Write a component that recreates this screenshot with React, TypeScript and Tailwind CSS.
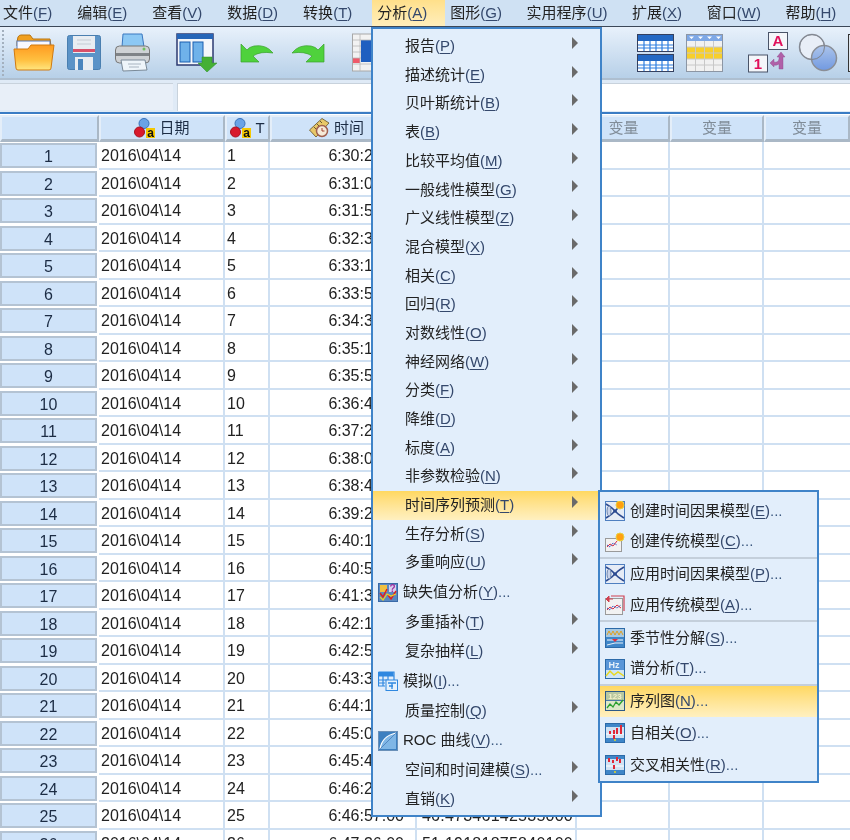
const CJK = "font-['Liberation_Sans','Noto_Sans_CJK_SC',sans-serif]"

const menuBar: [string, string][] = [
  ['文件', 'F'], ['编辑', 'E'], ['查看', 'V'], ['数据', 'D'], ['转换', 'T'], ['分析', 'A'],
  ['图形', 'G'], ['实用程序', 'U'], ['扩展', 'X'], ['窗口', 'W'], ['帮助', 'H'],
]

type Item = { label: string; key: string; dots?: boolean; arrow?: boolean; icon?: string; active?: boolean; h: string }

const analyze: Item[] = [
  { label: '报告', key: 'P', arrow: true, h: 'h-[28.7px]' },
  { label: '描述统计', key: 'E', arrow: true, h: 'h-[28.7px]' },
  { label: '贝叶斯统计', key: 'B', arrow: true, h: 'h-[28.7px]' },
  { label: '表', key: 'B', arrow: true, h: 'h-[28.7px]' },
  { label: '比较平均值', key: 'M', arrow: true, h: 'h-[28.7px]' },
  { label: '一般线性模型', key: 'G', arrow: true, h: 'h-[28.7px]' },
  { label: '广义线性模型', key: 'Z', arrow: true, h: 'h-[28.7px]' },
  { label: '混合模型', key: 'X', arrow: true, h: 'h-[28.7px]' },
  { label: '相关', key: 'C', arrow: true, h: 'h-[28.7px]' },
  { label: '回归', key: 'R', arrow: true, h: 'h-[28.7px]' },
  { label: '对数线性', key: 'O', arrow: true, h: 'h-[28.7px]' },
  { label: '神经网络', key: 'W', arrow: true, h: 'h-[28.7px]' },
  { label: '分类', key: 'F', arrow: true, h: 'h-[28.7px]' },
  { label: '降维', key: 'D', arrow: true, h: 'h-[28.7px]' },
  { label: '标度', key: 'A', arrow: true, h: 'h-[28.7px]' },
  { label: '非参数检验', key: 'N', arrow: true, h: 'h-[28.7px]' },
  { label: '时间序列预测', key: 'T', arrow: true, active: true, h: 'h-[28.7px]' },
  { label: '生存分析', key: 'S', arrow: true, h: 'h-[28.7px]' },
  { label: '多重响应', key: 'U', arrow: true, h: 'h-[28.7px]' },
  { label: '缺失值分析', key: 'Y', dots: true, icon: 'missing', h: 'h-[31px]' },
  { label: '多重插补', key: 'T', arrow: true, h: 'h-[28.7px]' },
  { label: '复杂抽样', key: 'L', arrow: true, h: 'h-[28.7px]' },
  { label: '模拟', key: 'I', dots: true, icon: 'sim', h: 'h-[31px]' },
  { label: '质量控制', key: 'Q', arrow: true, h: 'h-[28.7px]' },
  { label: 'ROC 曲线', key: 'V', dots: true, icon: 'roc', h: 'h-[31px]' },
  { label: '空间和时间建模', key: 'S', dots: true, arrow: true, h: 'h-[28.7px]' },
  { label: '直销', key: 'K', arrow: true, h: 'h-[28.7px]' },
]

type SubItem = { label: string; key: string; icon: string; active?: boolean; sep?: boolean }

const forecast: SubItem[] = [
  { label: '创建时间因果模型', key: 'E', icon: 'tcmNew' },
  { label: '创建传统模型', key: 'C', icon: 'tsNew', sep: true },
  { label: '应用时间因果模型', key: 'P', icon: 'tcm' },
  { label: '应用传统模型', key: 'A', icon: 'tsApply', sep: true },
  { label: '季节性分解', key: 'S', icon: 'season' },
  { label: '谱分析', key: 'T', icon: 'hz', sep: true },
  { label: '序列图', key: 'N', icon: 'seq', active: true },
  { label: '自相关', key: 'O', icon: 'acf' },
  { label: '交叉相关性', key: 'R', icon: 'ccf' },
]

const times = [
  '6:30:25.00', '6:31:03.00', '6:31:51.00', '6:32:34.00', '6:33:15.00', '6:33:56.00', '6:34:38.00',
  '6:35:19.00', '6:35:58.00', '6:36:41.00', '6:37:22.00', '6:38:03.00', '6:38:44.00', '6:39:25.00',
  '6:40:10.00', '6:40:51.00', '6:41:32.00', '6:42:13.00', '6:42:54.00', '6:43:35.00', '6:44:16.00',
  '6:45:01.00', '6:45:42.00', '6:46:23.00', '6:46:57.00', '6:47:36.00',
]

function Mn({ label, k, dots }: { label: string; k: string; dots?: boolean }) {
  return (
    <span className="whitespace-nowrap">
      {label}
      <span className="text-[#34486c]">(<span className="underline underline-offset-2">{k}</span>)</span>
      {dots && <span className="text-[#3d5a80]">...</span>}
    </span>
  )
}

function Folder() {
  return (
    <svg width="42" height="38" viewBox="0 0 42 38">
      <path d="M4 8 L5 3 Q6 1 8 1 L17 1 L20 5 L37 5 L38 12 L4 12Z" fill="#f0a020" stroke="#b87510" />
      <rect x="4" y="7" width="33" height="10" fill="#f8f8ff" stroke="#5578b8" />
      <path d="M1 15 L15 15 L18 11 L41 11 L38 34 Q38 36 36 36 L5 36 Q3 36 3 34Z" fill="url(#fold)" stroke="#d07a10" />
      <defs>
        <linearGradient id="fold" x1="0" y1="0" x2="0" y2="1">
          <stop offset="0" stopColor="#ff9a20" />
          <stop offset="0.6" stopColor="#ffc040" />
          <stop offset="1" stopColor="#ffe680" />
        </linearGradient>
      </defs>
    </svg>
  )
}

function Save() {
  return (
    <svg width="34" height="35" viewBox="0 0 34 35">
      <rect x="0.5" y="0.5" width="33" height="34" rx="2" fill="#5b93c7" stroke="#4a7fb0" />
      <rect x="6" y="1" width="22" height="17" fill="#e8edf2" />
      <rect x="6" y="14" width="22" height="3" fill="#d8506a" />
      <path d="M10 5H24M10 9H24" stroke="#c5ccd4" />
      <rect x="8" y="22" width="18" height="13" fill="#e8edf2" />
      <rect x="11" y="24" width="5" height="11" fill="#4a85bd" />
    </svg>
  )
}

function Printer() {
  return (
    <svg width="36" height="39" viewBox="0 0 36 39">
      <path d="M7 14 L8 1 L27 1 L29 14Z" fill="#8cc8f4" stroke="#3b78c0" />
      <rect x="0.5" y="13" width="34" height="17" rx="4" fill="#cfd2d5" stroke="#777" />
      <rect x="1" y="20" width="33" height="3" fill="#7f8387" />
      <circle cx="29" cy="16" r="1.5" fill="#6fc060" />
      <path d="M6 27 L30 27 L32 37 L8 38Z" fill="#eef5fa" stroke="#7a8a98" />
      <path d="M13 31H26M14 34H24" stroke="#a8b4c0" />
    </svg>
  )
}

function DataView() {
  return (
    <svg width="41" height="39" viewBox="0 0 41 39">
      <rect x="1" y="1" width="36" height="31" fill="#f4f7fb" stroke="#2c3a70" strokeWidth="1.5" />
      <rect x="1" y="1" width="36" height="5" fill="#2666b8" />
      <rect x="4" y="9" width="10" height="20" fill="#6fb2ea" stroke="#1a5fb0" />
      <rect x="17" y="9" width="10" height="20" fill="#6fb2ea" stroke="#1a5fb0" />
      <path d="M26 24H36V30H41L31 39L22 30H26Z" fill="#45b035" stroke="#2f8f28" strokeWidth="0.5" />
    </svg>
  )
}

function Arrow({ flip }: { flip?: boolean }) {
  return (
    <svg width="34" height="20" viewBox="0 0 34 20" className={flip ? '-scale-x-100' : ''}>
      <path d="M1 1 L1 19 L19 19 L13 13 Q20 8 33 10 Q26 1 14 3 Q9 4 7 7Z" fill="#4fd23c" stroke="#3ba02c" strokeWidth="0.7" />
    </svg>
  )
}

function SheetIcon() {
  return (
    <svg width="20" height="39" viewBox="0 0 20 39">
      <rect x="0.5" y="1" width="19" height="37" fill="#f2f2f2" stroke="#a8a8a8" />
      <rect x="9" y="7" width="11" height="22" fill="#1f5fc0" />
      <rect x="1" y="25" width="7" height="5" fill="#ef5a6a" />
      <path d="M1 7H20M1 13H9M1 19H9M1 25H9M1 31H20M8 1V38" stroke="#b8b8b8" strokeWidth="0.8" />
    </svg>
  )
}

function GridBlock() {
  return (
    <svg width="37" height="18" viewBox="0 0 37 18">
      <rect x="0.5" y="0.5" width="36" height="17" fill="#fff" stroke="#34405f" />
      <rect x="1" y="1" width="35" height="6" fill="#2569c4" />
      <path d="M1 11H36M1 14H36M7 7V17M13 7V17M19 7V17M25 7V17M31 7V17" stroke="#2f7fe0" strokeWidth="1.2" />
    </svg>
  )
}

function SplitTable() {
  return (
    <div className="flex flex-col gap-[2px]">
      <GridBlock />
      <GridBlock />
    </div>
  )
}

function YellowTable() {
  return (
    <svg width="37" height="38" viewBox="0 0 37 38">
      <rect x="0.5" y="0.5" width="36" height="37" fill="#f1f1f1" stroke="#8c96a4" />
      <rect x="1" y="1" width="35" height="6" fill="#7ea8e6" />
      <rect x="1" y="13" width="35" height="12" fill="#f7cf2c" />
      <path d="M1 13H36M1 19H36M1 25H36M1 31H36M9.500 7V37M18.500 7V37M27.500 7V37" stroke="#c8c8c8" />
      <path d="M3 2.500H8L5.500 5ZM12 2.500H17L14.500 5ZM21 2.500H26L23.500 5ZM30 2.500H35L32.500 5Z" fill="#fff" />
    </svg>
  )
}

function ValueLabels() {
  return (
    <svg width="40" height="41" viewBox="0 0 40 41">
      <rect x="20.500" y="0.500" width="19" height="17" fill="#f4f6fa" stroke="#4a5468" />
      <text x="30" y="14" fontSize="15" fontWeight="700" textAnchor="middle" fill="#e0105a" fontFamily="Liberation Sans">A</text>
      <rect x="0.500" y="23" width="19" height="17" fill="#f4f6fa" stroke="#4a5468" />
      <text x="10" y="37" fontSize="15" fontWeight="700" textAnchor="middle" fill="#e0105a" fontFamily="Liberation Sans">1</text>
      <path d="M33 20 L37 25 L35 25 L35 37 L31 37 L31 32 Q28 34 26 33 L26 35 L22 31 L26 27 L26 30 Q30 31 31 27 L31 25 L29 25Z" fill="#b060a8" stroke="#8c4a88" strokeWidth="0.4" />
    </svg>
  )
}

function Circles() {
  return (
    <svg width="40" height="39" viewBox="0 0 40 39">
      <defs>
        <linearGradient id="cb" x1="0" y1="0" x2="0" y2="1">
          <stop offset="0" stopColor="#a9c2ea" />
          <stop offset="1" stopColor="#6d96e0" />
        </linearGradient>
      </defs>
      <circle cx="14" cy="14" r="12.500" fill="#e8eef7" stroke="#9a9ea6" strokeWidth="1.500" />
      <circle cx="26" cy="25" r="12.500" fill="url(#cb)" fillOpacity="0.95" stroke="#8a8e96" strokeWidth="1.500" />
      <circle cx="14" cy="14" r="12.500" fill="none" stroke="#7f8590" strokeWidth="1" />
    </svg>
  )
}

function Bayes() {
  return (
    <svg width="21" height="20" viewBox="0 0 21 20" className="shrink-0">
      <circle cx="10" cy="5.500" r="5" fill="#6aa3e6" stroke="#3a72b8" />
      <circle cx="5.500" cy="14" r="5" fill="#d8192c" stroke="#a81020" />
      <rect x="12" y="10" width="9" height="10" fill="#f5c800" />
      <text x="16.500" y="18.500" fontSize="12" fontWeight="700" textAnchor="middle" fill="#111" fontFamily="Liberation Sans">a</text>
    </svg>
  )
}

function Ruler() {
  return (
    <svg width="21" height="20" viewBox="0 0 21 20" className="shrink-0">
      <path d="M0.500 12 L13 0.500 L20 5 L7 19Z" fill="#e8c868" stroke="#7a6a40" />
      <path d="M5 9L7 11M8 6L10 8M11 3L13 5" stroke="#6a5a30" />
      <circle cx="13" cy="13" r="5.500" fill="#f6ead8" stroke="#a06050" strokeWidth="1.500" />
      <path d="M13 10V13H15.500" stroke="#a04030" fill="none" />
    </svg>
  )
}

function MenuIcon({ name }: { name: string }) {
  if (name === 'missing') {
    return (
      <svg width="20" height="19" viewBox="0 0 20 19">
        <rect x="0.500" y="0.500" width="19" height="18" fill="#5a88c0" stroke="#3a6aa8" />
        <rect x="2" y="2" width="7" height="7" fill="#f0c040" />
        <rect x="11" y="2" width="7" height="7" fill="#d8d0f0" />
        <text x="14.500" y="9" fontSize="10" fontWeight="700" textAnchor="middle" fill="#a030a0" fontFamily="Liberation Sans">?</text>
        <path d="M2 10L5 14L9 6M10 12L13 16L18 8" stroke="#e02020" strokeWidth="1.500" fill="none" />
        <path d="M2 14L5 17L9 11L13 13L18 11" stroke="#f0d020" strokeWidth="1.200" fill="none" />
      </svg>
    )
  }
  if (name === 'sim') {
    return (
      <svg width="20" height="20" viewBox="0 0 20 20">
        <path d="M0.500 1H16V11M0.500 1V15H7M0.500 5H16M0.500 9H9M0.500 12H7M5 1V15M10 1V9" stroke="#2f88e0" strokeWidth="1.200" fill="none" />
        <rect x="0.500" y="1" width="15" height="4" fill="#2f88e0" />
        <rect x="8" y="9" width="11.500" height="10.500" fill="#e6f2fc" stroke="#2f88e0" />
        <path d="M10 12H18M14 12V18M11 15H15" stroke="#2f88e0" strokeWidth="1.300" />
      </svg>
    )
  }
  if (name === 'roc') {
    return (
      <svg width="20" height="20" viewBox="0 0 20 20">
        <rect x="0.500" y="0.500" width="19" height="19" fill="#3c7fc0" stroke="#6a90b8" />
        <path d="M2 18 Q4 5 18 2 L18 18Z" fill="#7fb6e6" />
        <path d="M2 18 Q4 5 18 2" stroke="#fff" strokeWidth="1.200" fill="none" />
        <path d="M2 18L18 2" stroke="#3468a8" strokeWidth="0.600" />
      </svg>
    )
  }
  return null
}

function SubIcon({ name }: { name: string }) {
  const chart = 'M2 14L5 10L8 13L11 8L14 11L18 6'
  if (name === 'tcmNew' || name === 'tcm') {
    return (
      <svg width="20" height="20" viewBox="0 0 20 20">
        <rect x="0.500" y="0.500" width="19" height="19" fill="#e6ecf6" stroke="#4f7fc0" />
        <path d="M1 3Q9 8 9.500 10Q9 12 1 17M19 3Q11 8 10.500 10Q11 12 19 17" fill="none" stroke="#2c4a90" strokeWidth="1.500" />
        <ellipse cx="4" cy="10" rx="2" ry="5" fill="#c8d2e8" stroke="#7088b0" />
        <circle cx="10" cy="10" r="1.800" fill="#2c4a90" />
        {name === 'tcmNew' && <circle cx="15" cy="4" r="4" fill="#ffa010" stroke="#e8d040" />}
      </svg>
    )
  }
  if (name === 'tsNew') {
    return (
      <svg width="20" height="20" viewBox="0 0 20 20">
        <rect x="0.500" y="6.500" width="16" height="13" fill="#f2f2f2" stroke="#9a9a9a" />
        <path d="M2 15L5 12L8 14L12 9" stroke="#e03040" fill="none" />
        <path d="M2 13L5 15L8 11L12 13" stroke="#3050c0" strokeDasharray="1.500 1" fill="none" />
        <circle cx="15" cy="5" r="4" fill="#ffa010" stroke="#e8d040" />
      </svg>
    )
  }
  if (name === 'tsApply') {
    return (
      <svg width="20" height="20" viewBox="0 0 20 20">
        <rect x="0.500" y="3.500" width="17" height="16" fill="#f2f2f2" stroke="#9a9a9a" />
        <path d="M6 1H19V16" stroke="#d04050" strokeWidth="1.200" fill="none" />
        <path d="M1 4H8M4 1L4 7L1 4Z" fill="#d04050" stroke="#d04050" />
        <path d="M2 15L5 12L8 14L12 10L16 13" stroke="#e03040" fill="none" />
        <path d="M2 13L5 15L8 11L12 13L16 10" stroke="#3050c0" strokeDasharray="1.500 1" fill="none" />
      </svg>
    )
  }
  if (name === 'season') {
    return (
      <svg width="20" height="20" viewBox="0 0 20 20">
        <rect x="0.500" y="0.500" width="19" height="19" fill="#3f86c8" stroke="#2c6aa8" />
        <rect x="1" y="1" width="18" height="8" fill="#a8c8e0" />
        <path d="M2 7L4 3L6 7L8 3L10 7L12 3L14 7L16 3L18 7" stroke="#e0a020" fill="none" />
        <path d="M2 12H18" stroke="#fff" />
        <path d="M7 11H13L10 14Z" fill="#e03040" />
        <path d="M2 17Q10 14 18 15" stroke="#e8f0f8" fill="none" />
      </svg>
    )
  }
  if (name === 'hz') {
    return (
      <svg width="20" height="20" viewBox="0 0 20 20">
        <rect x="0.500" y="0.500" width="19" height="19" fill="#5a96d8" stroke="#2c6aa8" />
        <text x="9" y="9" fontSize="9" fontWeight="700" textAnchor="middle" fill="#e6f0fa" fontFamily="Liberation Sans">Hz</text>
        <rect x="1" y="11" width="18" height="8" fill="#cfe4f6" />
        <path d="M1 17L5 12L9 16L13 13L19 17" stroke="#e8d820" strokeWidth="1.500" fill="none" />
      </svg>
    )
  }
  if (name === 'seq') {
    return (
      <svg width="20" height="20" viewBox="0 0 20 20">
        <rect x="0.500" y="0.500" width="19" height="19" fill="#4a78a8" stroke="#2c5a88" />
        <rect x="1" y="1" width="18" height="8" fill="#b8c8a0" />
        <text x="10" y="8" fontSize="8" fontWeight="700" textAnchor="middle" fill="#f4f0c8" fontFamily="Liberation Sans">123</text>
        <rect x="1" y="10" width="18" height="9" fill="#dce8c8" />
        <path d={chart} transform="translate(0 3)" stroke="#2aa030" strokeWidth="1.300" fill="none" />
      </svg>
    )
  }
  const bars = name === 'acf'
    ? 'M5 8V11M9 7V11M12 5V11M16 2V11M9 12V16'
    : 'M4 3V7M8 5V8M12 2V6M15 4V8M9 10V14'
  return (
    <svg width="20" height="20" viewBox="0 0 20 20">
      <rect x="0.500" y="0.500" width="19" height="19" fill="#cfe2f4" stroke="#2c6aa8" />
      <rect x="1" y="1" width="18" height="3" fill="#3f86c8" />
      <rect x="1" y="15" width="18" height="4" fill="#3f86c8" />
      <path d="M1 11H19" stroke="#fff" />
      <path d={bars} stroke="#e02838" strokeWidth="2" />
      <circle cx="10" cy="17" r="1" fill="#e8d820" />
    </svg>
  )
}

function Row({ n }: { n: number }) {
  const values: Record<number, string> = { 25: '46.47346142535000', 26: '51.19181875840100' }
  return (
    <div className={`grid grid-cols-[99px_126px_45px_147px_160px_93px_94px_86px] text-[16px] leading-[28px] text-[#222] ${n % 2 ? 'h-[28px]' : 'h-[27px]'}`}>
      <div className="pr-[2px] pt-[1px]">
        <div className="h-[25px] border-2 border-[#b4c3d3] bg-[#cfe3f9] text-center leading-[23px] text-[#1c2c44]">{n}</div>
      </div>
      <div className="overflow-hidden border-b-2 border-r-2 border-[#cfe0f2] bg-white pl-[2px]">2016\04\14</div>
      <div className="overflow-hidden border-b-2 border-r-2 border-[#cfe0f2] bg-white pl-[2px]">{n}</div>
      <div className="overflow-hidden border-b-2 border-r-2 border-[#cfe0f2] bg-white pr-[11px] text-right">{times[n - 1]}</div>
      <div className="overflow-hidden border-b-2 border-r-2 border-[#cfe0f2] bg-white pr-[2px] text-right tracking-[0.25px]">{values[n]}</div>
      <div className="border-b-2 border-r-2 border-[#cfe0f2] bg-white" />
      <div className="border-b-2 border-r-2 border-[#cfe0f2] bg-white" />
      <div className="border-b-2 border-[#cfe0f2] bg-white" />
    </div>
  )
}

function Head({ children, muted, shift }: { children?: React.ReactNode; muted?: boolean; shift?: boolean }) {
  return (
    <div className={`flex h-[27px] items-center justify-center gap-[4px] border-[2px] border-b-[3px] border-[#e4eef9] border-b-[#aab8c6] border-r-[#aab8c6] bg-[#cfe3f9] text-[15px] ${shift ? 'pr-[14px]' : ''} ${muted ? 'text-[#808c98]' : 'text-[#1c2c44]'}`}>
      {children}
    </div>
  )
}

export default function App() {
  return (
    <div className={`relative h-[840px] w-[850px] overflow-hidden bg-white blur-[0.35px] ${CJK}`}>
      {/* menu bar */}
      <div className="flex h-[27px] items-center border-b-[1px] border-[#3c4858] bg-[#cfe1f3] text-[15px] text-[#222]">
        {menuBar.map(([label, k], i) => (
          <div
            key={label}
            className={`flex h-[26px] items-center pl-[5px] ${i === 0 ? 'ml-[-2px]' : ''} ${i === 5 ? 'mr-[0px] bg-gradient-to-b from-[#ffe08a] to-[#ffeebb] pr-[18px]' : i < 5 ? 'mr-[15px] pr-[5px]' : 'mr-[14.600px] pr-[5px]'}`}
          >
            <Mn label={label} k={k} />
          </div>
        ))}
      </div>

      {/* toolbar */}
      <div className="flex h-[53px] items-center border-b-2 border-[#aebfd0] bg-gradient-to-b from-[#e8f1fb] to-[#b7d0e8] pl-[2px]">
        <div className="mr-[9px] h-[46px] w-[2px] shrink-0 border-l-2 border-dotted border-[#a3b0be]" />
        <div className="shrink-0"><Folder /></div>
        <div className="ml-[12px] shrink-0"><Save /></div>
        <div className="ml-[14px] shrink-0"><Printer /></div>
        <div className="ml-[25px] shrink-0"><DataView /></div>
        <div className="ml-[23px] shrink-0"><Arrow /></div>
        <div className="ml-[17px] shrink-0"><Arrow flip /></div>
        <div className="ml-[27px] shrink-0"><SheetIcon /></div>
        <div className="ml-[265px] shrink-0"><SplitTable /></div>
        <div className="ml-[12px] shrink-0"><YellowTable /></div>
        <div className="ml-[25px] shrink-0"><ValueLabels /></div>
        <div className="ml-[10px] shrink-0"><Circles /></div>
        <div className="ml-[10px] h-[38px] w-[10px] shrink-0 border border-[#333] bg-[#dfe6ee]" />
      </div>

      {/* formula bar */}
      <div className="flex h-[34px] gap-[4px] border-b-2 border-[#3a7cc4] bg-[#dfeaf6] pt-[3px]">
        <div className="h-[27px] w-[173px] border-t border-[#c8d2dc] bg-[#e8eff8]" />
        <div className="h-[28px] flex-1 border-l border-t border-[#c8d2dc] bg-white" />
      </div>

      {/* data grid */}
      <div className="grid grid-cols-[99px_126px_45px_147px_160px_93px_94px_86px] pt-[1px]">
        <Head />
        <Head><Bayes />日期</Head>
        <Head><Bayes />T</Head>
        <Head shift><Ruler />时间</Head>
        <Head muted>变量</Head>
        <Head muted>变量</Head>
        <Head muted>变量</Head>
        <Head muted>变量</Head>
      </div>
      {times.map((_, i) => <Row key={i} n={i + 1} />)}

      {/* analyze menu */}
      <div className="absolute left-[371px] top-[27px] w-[231px] border-2 border-[#3f83c8] bg-[#e2eefb] pb-[1px] pt-[3px] text-[15px] text-[#222]">
        {analyze.map((it, i) => (
          <div
            key={i}
            className={`relative flex items-center ${it.h} ${it.icon ? 'pl-[5px]' : 'pl-[32px]'} ${it.active ? 'bg-gradient-to-b from-[#ffd860] to-[#fff0c0]' : ''}`}
          >
            {it.icon && <span className="mr-[5px] flex w-[20px] shrink-0"><MenuIcon name={it.icon} /></span>}
            <Mn label={it.label} k={it.key} dots={it.dots} />
            {it.arrow && (
              <span className="absolute right-[22px] top-[5px] h-0 w-0 border-y-[6px] border-l-[6px] border-y-transparent border-l-[#6a6a6a]" />
            )}
          </div>
        ))}
      </div>

      {/* time series submenu */}
      <div className="absolute left-[598px] top-[490px] w-[221px] border-2 border-[#3f83c8] bg-[#e2eefb] pt-[3px] text-[15px] text-[#222]">
        {forecast.map((it, i) => (
          <div
            key={i}
            className={`flex h-[31.750px] items-center pl-[5px] ${it.sep ? 'border-b-2 border-[#c4cfdb]' : ''} ${it.active ? 'bg-gradient-to-b from-[#ffd860] to-[#fff0c0]' : ''}`}
          >
            <span className="mr-[5px] flex w-[20px] shrink-0"><SubIcon name={it.icon} /></span>
            <Mn label={it.label} k={it.key} dots />
          </div>
        ))}
      </div>
    </div>
  )
}
